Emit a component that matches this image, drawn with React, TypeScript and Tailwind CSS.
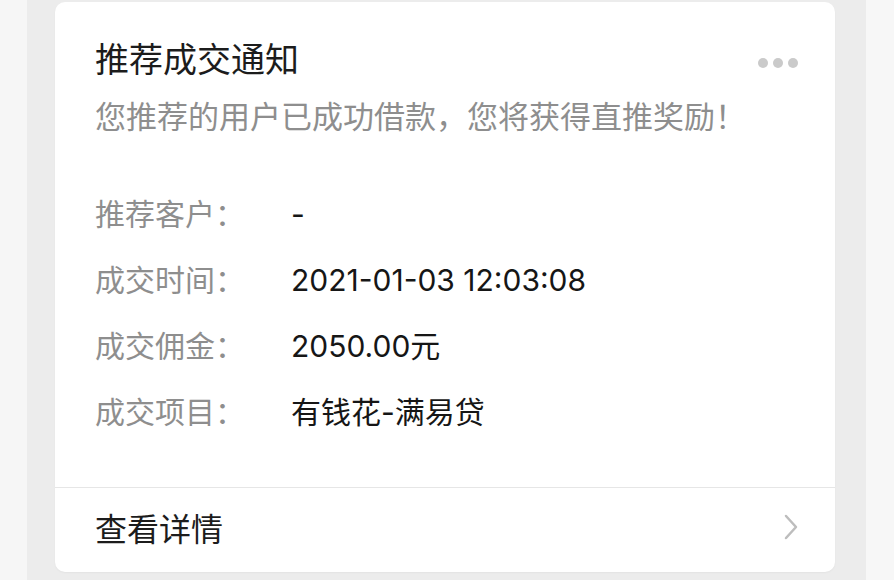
import React from "react";

const rows: [string, string][] = [
  ["推荐客户：", "-"],
  ["成交时间：", "2021-01-03 12:03:08"],
  ["成交佣金：", "2050.00元"],
  ["成交项目：", "有钱花-满易贷"],
];

export default function App() {
  return (
    <div
      className="flex h-[580px] w-[894px] overflow-hidden bg-[#f6f6f6]"
      style={{ fontFamily: '"Noto Sans CJK SC", "Noto Sans", sans-serif' }}
    >
      <div className="w-[27px] bg-[#f6f6f6]" />
      <div className="flex w-[839px] flex-col bg-[#ececec] pl-[28px] pr-[31px] pt-[2px]">
        <div className="flex h-[570px] w-[780px] flex-col rounded-[10px] bg-white shadow-[0_1px_2px_rgba(0,0,0,0.04)]">
          <div className="flex flex-col pl-[40px] pr-[37px] pt-[36px] pb-[57px]">
            <div className="flex items-center justify-between">
              <div className="text-[34px] leading-[40px] text-[#1c1c1c]">推荐成交通知</div>
              <div className="mt-[10px] flex gap-[5px]">
                <span className="h-[10px] w-[10px] rounded-full bg-[#cacaca]" />
                <span className="h-[10px] w-[10px] rounded-full bg-[#cacaca]" />
                <span className="h-[10px] w-[10px] rounded-full bg-[#cacaca]" />
              </div>
            </div>
            <div className="mt-[17px] text-[31px] leading-[40px] text-[#8e8e8e]">
              您推荐的用户已成功借款，您将获得直推奖励！
            </div>
            <div className="mt-[57px] flex flex-col gap-[26px]">
              {rows.map(([k, v]) => (
                <div key={k} className="flex h-[40px] items-baseline text-[30px] leading-[40px]">
                  <div className="w-[196px] shrink-0 text-[#8e8e8e]">{k}</div>
                  <div
                    className="text-[30px] text-[#161616]"
                    style={{ fontFamily: 'Inter, "Noto Sans CJK SC", sans-serif' }}
                  >
                    {v}
                  </div>
                </div>
              ))}
            </div>
          </div>
          <div className="h-px bg-[#e6e6e6]" />
          <div className="flex flex-1 items-center justify-between pl-[40px] pr-[37px] pb-[6px]">
            <div className="text-[32px] leading-[40px] text-[#1c1c1c]">查看详情</div>
            <svg width="14" height="26" viewBox="0 0 14 26" fill="none">
              <path d="M2 2 L12 13 L2 24" stroke="#bdbdbd" strokeWidth="2.5" strokeLinecap="round" strokeLinejoin="round" />
            </svg>
          </div>
        </div>
      </div>
      <div className="w-[28px] bg-[#f7f7f7]" />
    </div>
  );
}
